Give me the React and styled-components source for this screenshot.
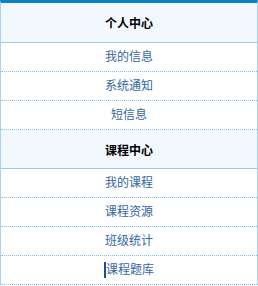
import styled, { createGlobalStyle } from "styled-components";

const GlobalStyle = createGlobalStyle`
    html, body {
        margin:0;
        padding:0;
        background:#fff;
    }
    body {
        font-family:"Liberation Sans", "Noto Sans CJK SC", sans-serif;
    }
`

const groups = [
    {
        title: "个人中心",
        items: ["我的信息", "系统通知", "短信息"],
    },
    {
        title: "课程中心",
        items: ["我的课程", "课程资源", "班级统计", "课程题库"],
    },
];

const App = () => {
    return (
        <>
            <GlobalStyle />
            <Menu>
                {groups.map((group, i) => (
                    <Group key={group.title}>
                        <GroupTitle $first={i === 0}>{group.title}</GroupTitle>
                        {group.items.map((item) => (
                            <Item key={item}>
                                <ItemLink $active={item === "课程题库"}>{item}</ItemLink>
                            </Item>
                        ))}
                    </Group>
                ))}
            </Menu>
        </>
    );
}

export default App;


const Menu = styled.div`
    width:258px;
    box-sizing:border-box;
    border-top:3px solid #0a80c9;
    border-left:1px solid #a8d2f4;
    border-right:1px solid #a8d2f4;
    display:flex;
    flex-direction:column;
`

const Group = styled.div`
    display:flex;
    flex-direction:column;
`

const GroupTitle = styled.div`
    height:${(p) => (p.$first ? "39px" : "38px")};
    display:flex;
    align-items:center;
    justify-content:center;
    background:#f3f8ff;
    border-bottom:1px solid #98cbf0;
    font-size:12px;
    font-weight:bold;
    color:#000;
`

const Item = styled.div`
    height:28px;
    display:flex;
    align-items:center;
    justify-content:center;
    border-bottom:1px dotted #86c2ee;
`

const ItemLink = styled.a`
    font-size:12px;
    color:#3565a3;
    text-decoration:none;
    line-height:15px;
    padding-top:1px;
    border-left:${(p) => (p.$active ? "2px solid #1a4f93" : "none")};
`
